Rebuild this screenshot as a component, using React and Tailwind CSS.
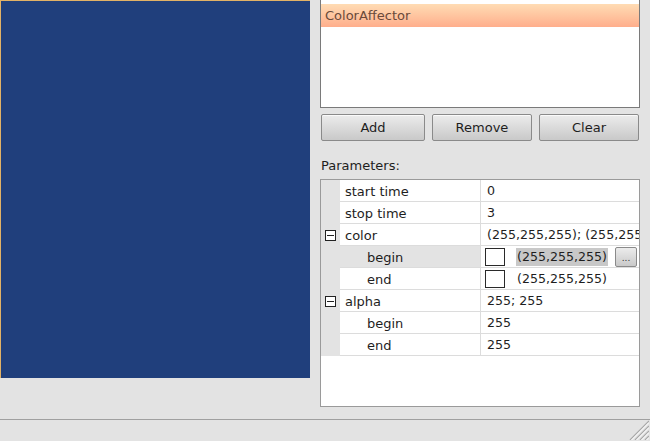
import React from 'react';

const rows = [
  { name: 'start time', value: '0' },
  { name: 'stop time', value: '3' },
  { name: 'color', value: '(255,255,255); (255,255,255)', group: true },
  { name: 'begin', value: '(255,255,255)', child: true, swatch: true, current: true },
  { name: 'end', value: '(255,255,255)', child: true, swatch: true },
  { name: 'alpha', value: '255; 255', group: true },
  { name: 'begin', value: '255', child: true },
  { name: 'end', value: '255', child: true },
];

const Collapse = () => (
  <span className="w-[11px] h-[11px] border border-[#222] bg-white flex items-center justify-center">
    <span className="w-[7px] h-px bg-[#222]" />
  </span>
);

const Btn = ({ children, className }) => (
  <button className={`h-[27px] rounded-[2px] border border-[#8a8a8a] bg-gradient-to-b from-[#ececec] to-[#c9c9c9] text-[13px] text-[#1e1e1e] shadow-[inset_0_1px_0_#fafafa] ${className}`}>
    {children}
  </button>
);

const PropertyRow = ({ row }) => (
  <div className="flex h-[22px]">
    <div className="w-[19px] bg-[#e3e3e3] flex items-center justify-center pt-px">
      {row.group && <Collapse />}
    </div>
    <div
      className={`w-[140px] border-b border-[#dcdcdc] flex items-center pt-[2px] ${row.child ? 'pl-[27px]' : 'pl-[5px]'} ${row.current ? 'bg-[#e3e3e3]' : 'bg-white'}`}
    >
      {row.name}
    </div>
    <div className="w-px bg-[#dcdcdc]" />
    <div className="flex-1 border-b border-[#dcdcdc] flex items-center pl-[4px] overflow-hidden whitespace-nowrap text-[12.6px]">
      {row.swatch ? (
        <>
          <span className="w-[20px] h-[18px] border border-[#2a2a2a] bg-white shrink-0" />
          <span className={`ml-[11px] px-[1px] h-[18px] pt-[2px] flex items-center ${row.current ? 'bg-[#c8c8c8]' : ''}`}>
            {row.value}
          </span>
          {row.current && (
            <button className="ml-auto mr-[2px] w-[22px] h-[20px] rounded-[2px] border border-[#8a8a8a] bg-gradient-to-b from-[#ececec] to-[#c9c9c9] text-[9px] leading-none pt-[4px] text-[#333]">
              ...
            </button>
          )}
        </>
      ) : (
        <span className="pl-[2px] pt-[2px]">{row.value}</span>
      )}
    </div>
  </div>
);

export default function App() {
  return (
    <div className="w-[650px] h-[441px] bg-[#e3e3e3] flex flex-col overflow-hidden font-['DejaVu_Sans',sans-serif] text-[13px] text-[#1e1e1e]">
      <div className="flex h-[419px]">
        <div className="w-[310px] h-[378px] bg-[#203f7c] border-l border-t border-[#e2b266]" />
        <div className="ml-[10px] w-[320px] flex flex-col">
          <div className="h-[108px] bg-white border-x border-b border-[#7a7a7a] pt-[4px]">
            <div className="h-[23px] flex items-center pl-[4px] bg-gradient-to-b from-[#ffdcb4] to-[#ffae8c] text-[#6a4a3a]">
              ColorAffector
            </div>
          </div>
          <div className="mt-[6px] flex gap-[7px] pl-px">
            <Btn className="w-[104px]">Add</Btn>
            <Btn className="w-[100px]">Remove</Btn>
            <Btn className="w-[100px]">Clear</Btn>
          </div>
          <div className="mt-[17px] h-[16px] leading-[16px] pl-px">Parameters:</div>
          <div className="mt-[5px] h-[228px] bg-white border border-[#9a9a9a] flex flex-col">
            {rows.map((r, i) => (
              <PropertyRow key={i} row={r} />
            ))}
          </div>
        </div>
      </div>
      <div className="h-[22px] border-t border-[#a0a0a0] flex justify-end items-end">
        <svg width="20" height="20" viewBox="0 0 20 20" className="mb-px mr-px">
          {[0, 5, 10, 15].map((o) => (
            <g key={o}>
              <line x1={20} y1={o + 1} x2={o + 1} y2={20} stroke="#a8a8a8" strokeWidth="1.2" />
              <line x1={20} y1={o + 2.5} x2={o + 2.5} y2={20} stroke="#ffffff" strokeWidth="1" />
            </g>
          ))}
        </svg>
      </div>
    </div>
  );
}
